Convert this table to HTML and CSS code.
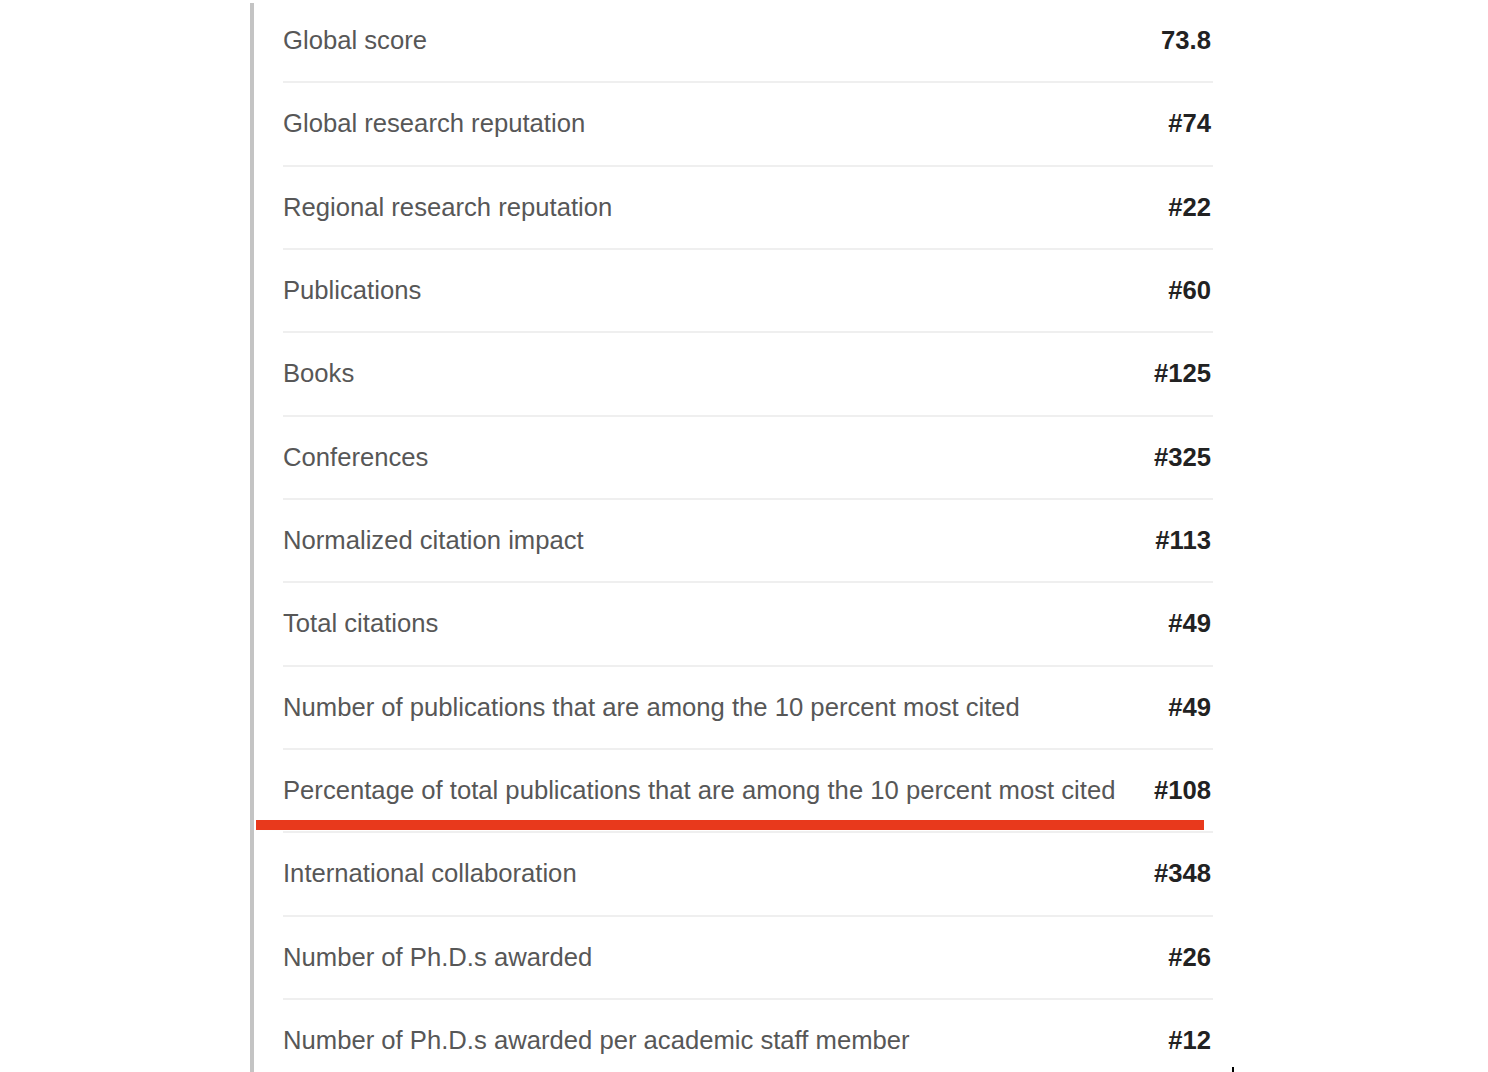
FILE: index.html
```html
<!DOCTYPE html>
<html lang="en">
<head>
<meta charset="utf-8">
<title>Indicator rankings</title>
<link rel="stylesheet" href="styles.css">
</head>
<body>
<div class="page">
  <section class="panel">
    <ul class="rows">
      <li class="row"><span class="label">Global score</span><span class="value">73.8</span></li>
      <li class="row"><span class="label">Global research reputation</span><span class="value">#74</span></li>
      <li class="row"><span class="label">Regional research reputation</span><span class="value">#22</span></li>
      <li class="row"><span class="label">Publications</span><span class="value">#60</span></li>
      <li class="row"><span class="label">Books</span><span class="value">#125</span></li>
      <li class="row"><span class="label">Conferences</span><span class="value">#325</span></li>
      <li class="row"><span class="label">Normalized citation impact</span><span class="value">#113</span></li>
      <li class="row"><span class="label">Total citations</span><span class="value">#49</span></li>
      <li class="row"><span class="label">Number of publications that are among the 10 percent most cited</span><span class="value">#49</span></li>
      <li class="row row-marked"><span class="label">Percentage of total publications that are among the 10 percent most cited</span><span class="value">#108</span><span class="underline-mark"></span></li>
      <li class="row"><span class="label">International collaboration</span><span class="value">#348</span></li>
      <li class="row"><span class="label">Number of Ph.D.s awarded</span><span class="value">#26</span></li>
      <li class="row"><span class="label">Number of Ph.D.s awarded per academic staff member</span><span class="value">#12</span></li>
    </ul>
  </section>
  <span class="tick"></span>
</div>
</body>
</html>
```
FILE: styles.css
```css
html, body {
  margin: 0;
  padding: 0;
  background: #ffffff;
}
body {
  font-family: "Liberation Sans", Arial, Helvetica, sans-serif;
  overflow: hidden;
  height: 1072px;
}
.page {
  position: relative;
  width: 1488px;
  height: 1072px;
  overflow: hidden;
}
.panel {
  margin-left: 250px;
  padding-top: 3px;
  width: 963px;
  border-left: 4px solid #c4c4c4;
  border-top: 0;
  padding-left: 29px;
  box-sizing: border-box;
  height: 1100px;
  position: relative;
  top: 3px;
}
.rows {
  list-style: none;
  margin: 0;
  padding: 0;
  margin-top: -6px;
}
.row {
  position: relative;
  display: flex;
  align-items: center;
  justify-content: space-between;
  height: 83.33px;
  box-sizing: border-box;
  border-bottom: 2px solid #efefef;
  padding-right: 2px;
  font-size: 25.65px;
}
.label {
  color: #575757;
}
.value {
  color: #222222;
  font-weight: bold;
}
.underline-mark {
  position: absolute;
  left: -27px;
  right: 9px;
  bottom: 1px;
  height: 10px;
  background: #e8391c;
}
.tick {
  position: absolute;
  left: 1232px;
  top: 1067px;
  width: 2px;
  height: 5px;
  background: #000000;
}
```
